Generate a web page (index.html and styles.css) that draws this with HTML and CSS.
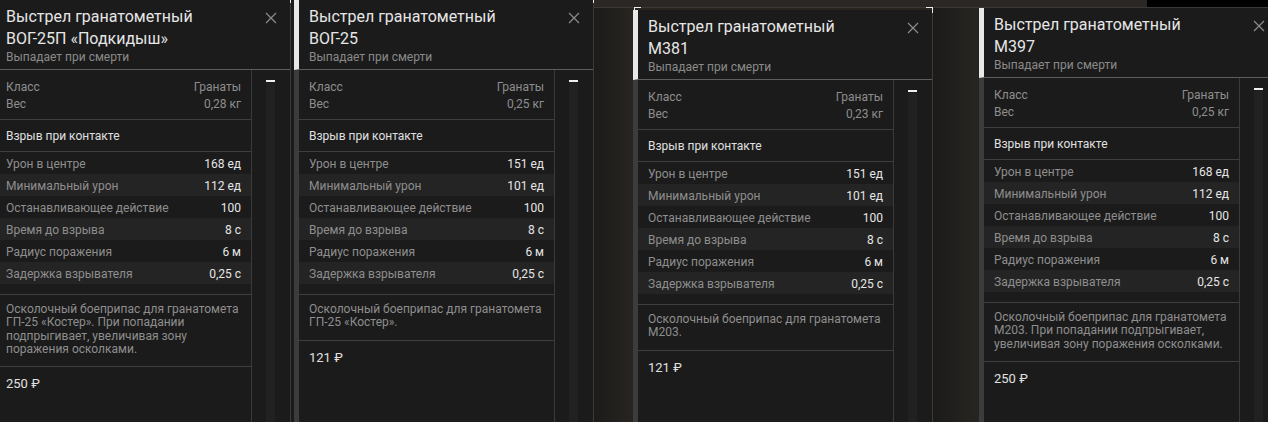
FILE: index.html
```html
<!DOCTYPE html>
<html lang="ru">
<head>
  <meta charset="UTF-8" />
  <title>Выстрелы гранатометные</title>
  <meta name="viewport" content="width=device-width, initial-scale=1.0">
  <link rel="stylesheet" href="styles.css">
</head>
<body>
  <div class="collage">

    <!-- VOG-25P -->
    <div class="shot shot-1">
      <div class="card selected">
        <div class="card-head">
          <div class="titles">
            <h2>Выстрел гранатометный<br>ВОГ-25П «Подкидыш»</h2>
            <p>Выпадает при смерти</p>
          </div>
          <button class="close" aria-label="Закрыть"><svg viewBox="0 0 12 12" width="12" height="12"><path d="M1 1L11 11M11 1L1 11" /></svg></button>
        </div>
        <div class="card-body">
          <div class="info">
            <div class="props">
              <div class="row"><span>Класс</span><span>Гранаты</span></div>
              <div class="row"><span>Вес</span><span>0,28 кг</span></div>
            </div>
            <div class="trigger">Взрыв при контакте</div>
            <div class="stats">
              <div class="row"><span>Урон в центре</span><b>168 ед</b></div>
              <div class="row"><span>Минимальный урон</span><b>112 ед</b></div>
              <div class="row"><span>Останавливающее действие</span><b>100</b></div>
              <div class="row"><span>Время до взрыва</span><b>8 с</b></div>
              <div class="row"><span>Радиус поражения</span><b>6 м</b></div>
              <div class="row"><span>Задержка взрывателя</span><b>0,25 с</b></div>
            </div>
            <p class="desc">Осколочный боеприпас для гранатомета ГП-25 «Костер». При попадании подпрыгивает, увеличивая зону поражения осколками.</p>
            <div class="price">250 ₽</div>
          </div>
          <div class="scroll"><span class="thumb"></span></div>
        </div>
      </div>
    </div>

    <!-- VOG-25 -->
    <div class="shot shot-2">
      <div class="card selected">
        <div class="card-head">
          <div class="titles">
            <h2>Выстрел гранатометный<br>ВОГ-25</h2>
            <p>Выпадает при смерти</p>
          </div>
          <button class="close" aria-label="Закрыть"><svg viewBox="0 0 12 12" width="12" height="12"><path d="M1 1L11 11M11 1L1 11" /></svg></button>
        </div>
        <div class="card-body">
          <div class="info">
            <div class="props">
              <div class="row"><span>Класс</span><span>Гранаты</span></div>
              <div class="row"><span>Вес</span><span>0,25 кг</span></div>
            </div>
            <div class="trigger">Взрыв при контакте</div>
            <div class="stats">
              <div class="row"><span>Урон в центре</span><b>151 ед</b></div>
              <div class="row"><span>Минимальный урон</span><b>101 ед</b></div>
              <div class="row"><span>Останавливающее действие</span><b>100</b></div>
              <div class="row"><span>Время до взрыва</span><b>8 с</b></div>
              <div class="row"><span>Радиус поражения</span><b>6 м</b></div>
              <div class="row"><span>Задержка взрывателя</span><b>0,25 с</b></div>
            </div>
            <p class="desc">Осколочный боеприпас для гранатомета ГП-25 «Костер».</p>
            <div class="price">121 ₽</div>
          </div>
          <div class="scroll"><span class="thumb"></span></div>
        </div>
      </div>
    </div>

    <!-- M381 -->
    <div class="shot shot-3">
      <div class="topbar"></div>
      <div class="card selected">
        <div class="card-head">
          <div class="titles">
            <h2>Выстрел гранатометный<br>М381</h2>
            <p>Выпадает при смерти</p>
          </div>
          <button class="close" aria-label="Закрыть"><svg viewBox="0 0 12 12" width="12" height="12"><path d="M1 1L11 11M11 1L1 11" /></svg></button>
        </div>
        <div class="card-body">
          <div class="info">
            <div class="props">
              <div class="row"><span>Класс</span><span>Гранаты</span></div>
              <div class="row"><span>Вес</span><span>0,23 кг</span></div>
            </div>
            <div class="trigger">Взрыв при контакте</div>
            <div class="stats">
              <div class="row"><span>Урон в центре</span><b>151 ед</b></div>
              <div class="row"><span>Минимальный урон</span><b>101 ед</b></div>
              <div class="row"><span>Останавливающее действие</span><b>100</b></div>
              <div class="row"><span>Время до взрыва</span><b>8 с</b></div>
              <div class="row"><span>Радиус поражения</span><b>6 м</b></div>
              <div class="row"><span>Задержка взрывателя</span><b>0,25 с</b></div>
            </div>
            <p class="desc">Осколочный боеприпас для гранатомета М203.</p>
            <div class="price">121 ₽</div>
          </div>
          <div class="scroll"><span class="thumb"></span></div>
        </div>
      </div>
    </div>

    <!-- M397 -->
    <div class="shot shot-4">
      <div class="topbar"><span class="topbar-dark"></span></div>
      <div class="card">
        <div class="card-head">
          <div class="titles">
            <h2>Выстрел гранатометный<br>М397</h2>
            <p>Выпадает при смерти</p>
          </div>
          <button class="close" aria-label="Закрыть"><svg viewBox="0 0 12 12" width="12" height="12"><path d="M1 1L11 11M11 1L1 11" /></svg></button>
        </div>
        <div class="card-body">
          <div class="info">
            <div class="props">
              <div class="row"><span>Класс</span><span>Гранаты</span></div>
              <div class="row"><span>Вес</span><span>0,25 кг</span></div>
            </div>
            <div class="trigger">Взрыв при контакте</div>
            <div class="stats">
              <div class="row"><span>Урон в центре</span><b>168 ед</b></div>
              <div class="row"><span>Минимальный урон</span><b>112 ед</b></div>
              <div class="row"><span>Останавливающее действие</span><b>100</b></div>
              <div class="row"><span>Время до взрыва</span><b>8 с</b></div>
              <div class="row"><span>Радиус поражения</span><b>6 м</b></div>
              <div class="row"><span>Задержка взрывателя</span><b>0,25 с</b></div>
            </div>
            <p class="desc">Осколочный боеприпас для гранатомета М203. При попадании подпрыгивает, увеличивая зону поражения осколками.</p>
            <div class="price">250 ₽</div>
          </div>
          <div class="scroll"><span class="thumb"></span></div>
        </div>
      </div>
    </div>

  </div>
</body>
</html>
```

FILE: styles.css
```css
body {
  margin: 0;
  background: #1b1b1b;
  color: #e4e4e4;
  font-family: Roboto, "Noto Sans", sans-serif;
  height: 422px;
  overflow: hidden;
}

.collage {
  display: flex;
  height: 422px;
}

/* each screenshot of the collage */
.shot {
  flex: none;
  overflow: hidden;
  background: #1b1b1b;
}

.shot-1 { width: 292px; }
.shot-1 .card { margin-left: -9px; }

.shot-2 { width: 300px; padding-left: 2px; }

.shot-3 {
  width: 300px;
  padding-left: 39px;
  background: linear-gradient(90deg, #1c1b1a, #282521 40px);
}
.shot-3 .topbar { margin-left: -39px; }
.shot-3 .card { margin-top: 2px; }

.shot-4 {
  width: 289px;
  padding-left: 46px;
  background: linear-gradient(90deg, #1c1b1a, #282521 46px);
}
.shot-4 .topbar { margin-left: -46px; height: 7px; }

.topbar {
  height: 7px;
  background: #2a2724;
  border-bottom: 1px solid #3b3835;
  display: flex;
  justify-content: flex-end;
}

.topbar-dark {
  width: 121px;
  background: #000;
}

/* card */
.card {
  width: 300px;
  position: relative;
  background: #1b1b1b;
  border-right: 1px solid #3a3a3a;
  box-sizing: border-box;
}

.card.selected::before,
.card.selected::after {
  content: "";
  position: absolute;
  top: -3px;
  width: 6px;
  height: 5px;
  border-top: 1px solid #eee;
}
.card.selected::before { left: 1px; border-left: 1px solid #eee; }
.card.selected::after { right: -1px; border-right: 1px solid #eee; }

.card-head {
  display: flex;
  height: 69px;
  border-left: 5px solid #e8e8e8;
  border-bottom: 1px solid #5e5e5e;
}

.titles {
  flex: 1;
  padding: 6px 10px 0;
}

.titles h2 {
  margin: 0;
  font-size: 16px;
  font-weight: 400;
  line-height: 22px;
  color: #e6e6e6;
}

.titles p {
  margin: 0;
  font-size: 12px;
  line-height: 15px;
  color: #8a8a8a;
}

.close {
  width: 38px;
  padding: 12px 0 0;
  background: none;
  border: none;
  align-self: flex-start;
  display: flex;
  justify-content: center;
}

.close path {
  stroke: #8c8c8c;
  stroke-width: 1.2;
  fill: none;
}

.card-body {
  display: flex;
  border-left: 5px solid #3c3c3c;
  height: 400px;
}

.info {
  width: 255px;
  flex: none;
  border-right: 1px solid #3a3a3a;
  font-size: 12px;
  color: #8e8e8e;
}

.row {
  display: flex;
  justify-content: space-between;
  padding: 0 10px;
}

.props {
  padding: 9px 0 6px;
  line-height: 17px;
  border-bottom: 1px solid #3e3e3e;
}

.trigger {
  padding: 9px 10px 7px;
  line-height: 15px;
  color: #e0e0e0;
  border-bottom: 1px solid #3e3e3e;
}

.stats {
  padding-bottom: 10px;
  border-bottom: 1px solid #3e3e3e;
}

.stats .row {
  height: 22px;
  box-sizing: border-box;
  padding-top: 2px;
  align-items: center;
}

.stats .row:nth-child(even) {
  background: #242424;
}

.stats b {
  font-weight: 400;
  color: #e6e6e6;
}

.desc {
  margin: 0;
  padding: 8px 10px 10px;
  line-height: 13.3px;
  border-bottom: 1px solid #3e3e3e;
}

.price {
  padding: 9px 10px;
  line-height: 16px;
  font-size: 13px;
  color: #e0e0e0;
}

/* scroll column */
.scroll {
  flex: 1;
  display: flex;
  flex-direction: column;
  padding: 10px 15px 0 14px;
}

.thumb {
  height: 2px;
  background: #f0f0f0;
  flex: none;
}

.scroll::after {
  content: "";
  flex: 1;
  margin-top: 1px;
  background: #212121;
}
```
